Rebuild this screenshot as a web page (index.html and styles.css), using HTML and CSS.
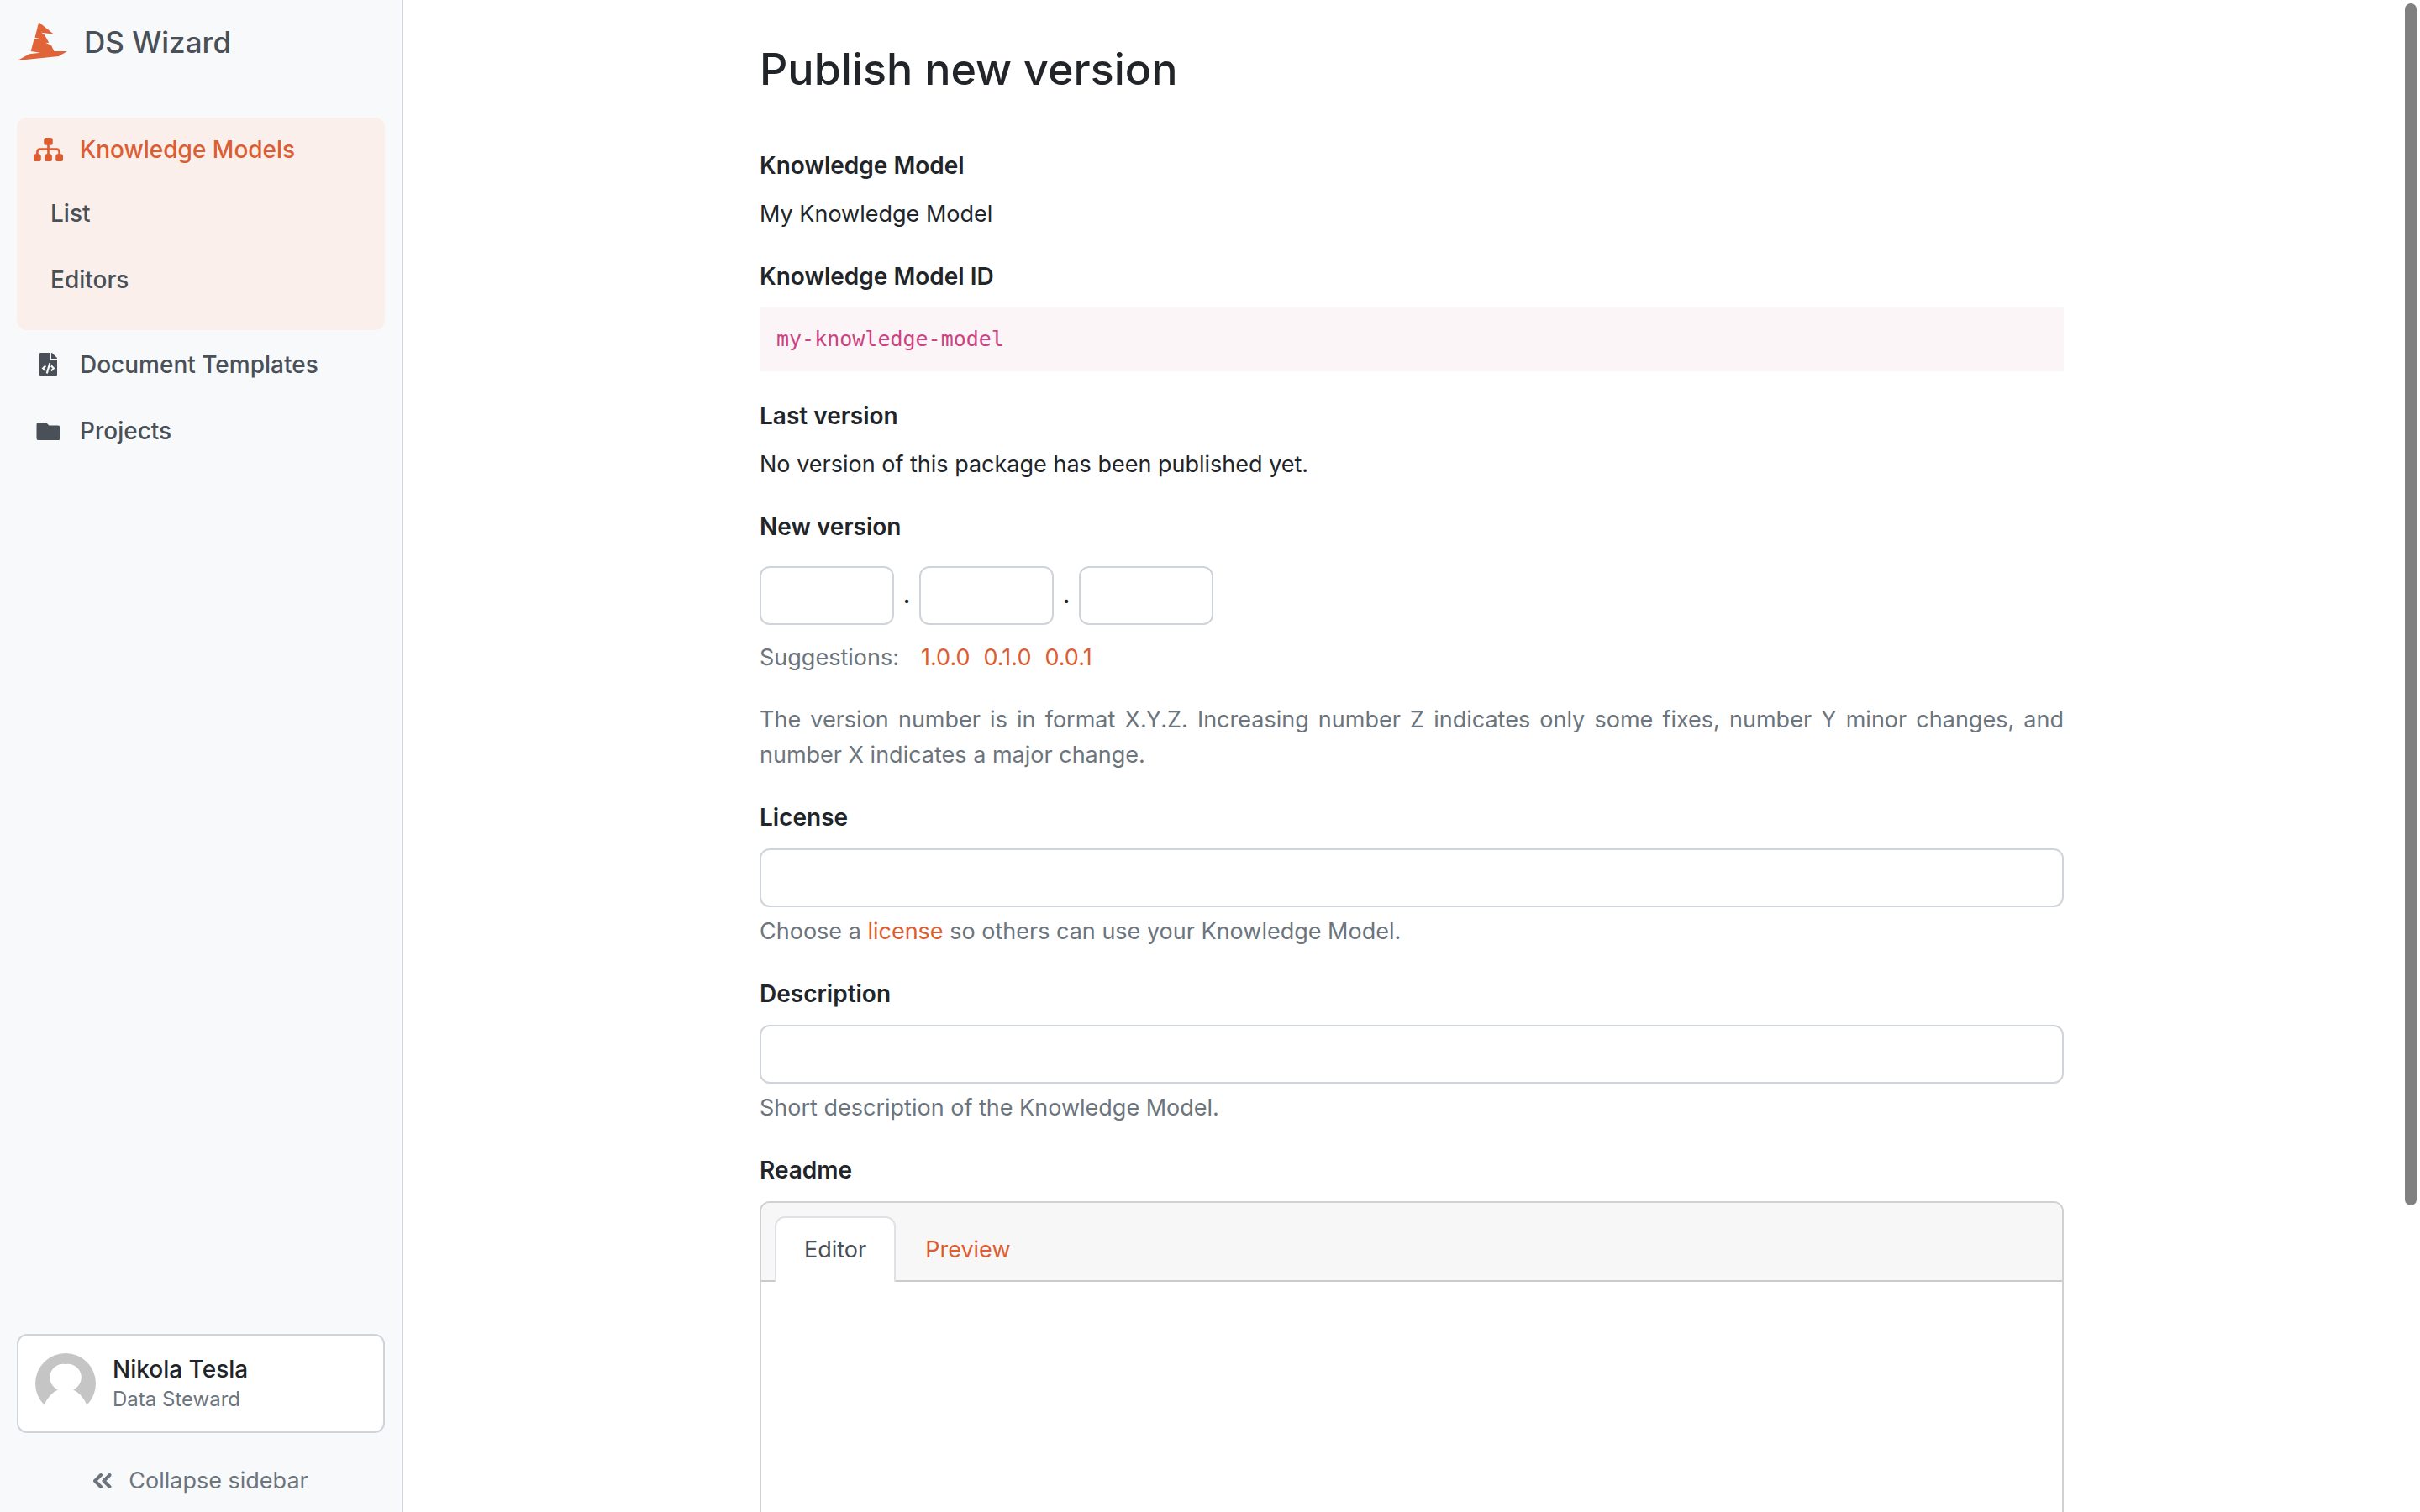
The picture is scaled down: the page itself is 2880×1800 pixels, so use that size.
FILE: index.html
```html
<!DOCTYPE html>
<html lang="en">
<head>
<meta charset="utf-8">
<title>Publish new version – DS Wizard</title>
<meta name="viewport" content="width=device-width, initial-scale=1">
<link rel="stylesheet" href="styles.css">
</head>
<body>
<div class="app">
  <aside class="sidebar">
    <a class="brand" href="#">
      <svg class="brand-logo" viewBox="0 0 60 46" aria-hidden="true"><path d="M26 0h1L44 13.700 29.300 11.700 33 14.500 38.300 23.700 34.500 24 41 27 44.500 34H60L50 40 0.700 45 15 37.300 28 35.700 16.700 34 20.500 19.800 26.700 18.700 21.500 17.700Z"/></svg>
      <span>DS Wizard</span>
    </a>
    <nav class="menu" aria-label="Main">
      <div class="menu-group">
        <a class="menu-link menu-link-active" href="#">
          <svg class="icon icon-sitemap" viewBox="0 0 640 512" aria-hidden="true"><path d="M224 48a48 48 0 0 1 48-48h96a48 48 0 0 1 48 48v64a48 48 0 0 1-48 48h-24v64h160a80 80 0 0 1 80 80v48h8a48 48 0 0 1 48 48v64a48 48 0 0 1-48 48h-64a48 48 0 0 1-48-48v-64a48 48 0 0 1 48-48h8v-48a32 32 0 0 0-32-32H344v80h8a48 48 0 0 1 48 48v64a48 48 0 0 1-48 48h-64a48 48 0 0 1-48-48v-64a48 48 0 0 1 48-48h8v-80H136a32 32 0 0 0-32 32v48h8a48 48 0 0 1 48 48v64a48 48 0 0 1-48 48H48a48 48 0 0 1-48-48v-64a48 48 0 0 1 48-48h8v-48a80 80 0 0 1 80-80h160v-64h-24a48 48 0 0 1-48-48z"/></svg>
          <span>Knowledge Models</span>
        </a>
        <div class="submenu">
          <a class="menu-link" href="#">List</a>
          <a class="menu-link" href="#">Editors</a>
        </div>
      </div>
      <a class="menu-link" href="#">
        <svg class="icon icon-file" viewBox="0 0 384 512" aria-hidden="true"><path d="M384 121.900V128H256V0h6.100c6.400 0 12.500 2.500 17 7l97.900 98c4.500 4.500 7 10.600 7 16.900zM248 160c-13.200 0-24-10.800-24-24V0H24C10.700 0 0 10.700 0 24v464c0 13.300 10.700 24 24 24h336c13.300 0 24-10.700 24-24V160H248zM123.200 400.500a5.400 5.400 0 0 1-7.600.2l-64.900-60.800a5.400 5.400 0 0 1 0-7.900l64.900-60.800a5.400 5.400 0 0 1 7.600.2l19.600 20.900a5.400 5.400 0 0 1-.4 7.700L101.700 336l40.800 35.900a5.400 5.400 0 0 1 .4 7.700zm51.300 50.500l-27.500-8a5.400 5.400 0 0 1-3.700-6.700l61.500-211.600a5.400 5.400 0 0 1 6.700-3.700l27.500 8a5.400 5.400 0 0 1 3.700 6.700l-61.500 211.600a5.400 5.400 0 0 1-6.700 3.700zm160.800-111l-64.900 60.800a5.400 5.400 0 0 1-7.600-.2l-19.600-20.900a5.400 5.400 0 0 1 .4-7.700l40.700-36-40.800-35.900a5.400 5.400 0 0 1-.4-7.700l19.600-20.900a5.400 5.400 0 0 1 7.600-.2l64.900 60.800a5.400 5.400 0 0 1 .1 7.900z"/></svg>
        <span>Document Templates</span>
      </a>
      <a class="menu-link" href="#">
        <svg class="icon icon-folder" viewBox="0 0 512 384" aria-hidden="true"><path d="M464 64H272L208 0H48A48 48 0 0 0 0 48v288a48 48 0 0 0 48 48h416a48 48 0 0 0 48-48V112a48 48 0 0 0-48-48z"/></svg>
        <span>Projects</span>
      </a>
    </nav>
    <div class="sidebar-footer">
      <a class="profile" href="#">
        <svg class="avatar" viewBox="0 0 72 72" aria-hidden="true"><circle class="avatar-back" cx="36" cy="36" r="36"/><path class="avatar-person" d="M36 13a16 16 0 0 1 9 30.500q10.500 4 17 19.500Q49 74 36 72 23 74 10 63 16.500 47.500 27 43.500A16 16 0 0 1 36 13z"/></svg>
        <span class="profile-text">
          <span class="profile-name">Nikola Tesla</span>
          <span class="profile-role">Data Steward</span>
        </span>
      </a>
      <button class="collapse" type="button">
        <svg class="icon-collapse" viewBox="0 0 22 18" aria-hidden="true"><path d="M9 2 2 9l7 7M19.500 2l-7 7 7 7"/></svg>
        <span>Collapse sidebar</span>
      </button>
    </div>
  </aside>

  <main class="content">
    <form class="page">
      <h1 class="page-title">Publish new version</h1>

      <div class="group">
        <span class="label">Knowledge Model</span>
        <p class="value">My Knowledge Model</p>
      </div>

      <div class="group">
        <span class="label">Knowledge Model ID</span>
        <code class="code">my-knowledge-model</code>
      </div>

      <div class="group">
        <span class="label">Last version</span>
        <p class="value">No version of this package has been published yet.</p>
      </div>

      <div class="group">
        <label class="label" for="version-major">New version</label>
        <div class="version-inputs">
          <input class="input" id="version-major" type="text" aria-label="Major version">
          <span class="dot">.</span>
          <input class="input" type="text" aria-label="Minor version">
          <span class="dot">.</span>
          <input class="input" type="text" aria-label="Patch version">
        </div>
        <div class="suggestions">
          <span class="suggestions-label">Suggestions:</span>
          <a class="link" href="#">1.0.0</a>
          <a class="link" href="#">0.1.0</a>
          <a class="link" href="#">0.0.1</a>
        </div>
      </div>

      <p class="group note">The version number is in format X.Y.Z. Increasing number Z indicates only some fixes, number Y minor changes, and number X indicates a major change.</p>

      <div class="group">
        <label class="label" for="license">License</label>
        <input class="input" id="license" type="text">
        <p class="help">Choose a <a class="link" href="#">license</a> so others can use your Knowledge Model.</p>
      </div>

      <div class="group">
        <label class="label" for="description">Description</label>
        <input class="input" id="description" type="text">
        <p class="help">Short description of the Knowledge Model.</p>
      </div>

      <div class="group">
        <label class="label" for="readme">Readme</label>
        <div class="card">
          <div class="tabs" role="tablist">
            <button class="tab tab-active" type="button" role="tab" aria-selected="true">Editor</button>
            <button class="tab" type="button" role="tab" aria-selected="false">Preview</button>
          </div>
          <textarea class="editor" id="readme"></textarea>
        </div>
      </div>
    </form>
    <div class="scroll-thumb" aria-hidden="true"></div>
  </main>
</div>
</body>
</html>
```
FILE: styles.css
```css
:root {
  --orange: #dc5d31;
  --text: #212529;
  --text-soft: #495057;
  --muted: #6c757d;
  --line: #ced4da;
}

* {
  box-sizing: border-box;
}

body {
  margin: 0;
  background: #fff;
  color: var(--text);
  font-family: Inter, "Liberation Sans", sans-serif;
  font-size: 27px;
  line-height: 42px;
}

a {
  text-decoration: none;
}

p {
  margin: 0;
}

button,
input,
textarea {
  font: inherit;
}

.app {
  display: flex;
  height: 100vh;
}

/* Sidebar */

.sidebar {
  display: flex;
  flex: 0 0 480px;
  flex-direction: column;
  padding: 20px 20px 16px;
  background: #f8f9fb;
  border-right: 2px solid var(--line);
}

.brand {
  display: flex;
  align-items: center;
  gap: 20px;
  height: 60px;
  margin-bottom: 60px;
  color: var(--text-soft);
  font-size: 35px;
  font-weight: 500;
}

.brand-logo {
  width: 60px;
  height: 46px;
  fill: #e16438;
}

.menu {
  display: flex;
  flex-direction: column;
  gap: 3px;
}

.menu-group {
  padding-bottom: 22px;
  background: #faefea;
  border-radius: 12px;
}

.menu-link {
  display: flex;
  align-items: center;
  gap: 20px;
  padding: 17px 20px;
  color: var(--text-soft);
  font-size: 28px;
  font-weight: 500;
}

.menu-link-active {
  color: var(--orange);
}

.submenu {
  display: flex;
  flex-direction: column;
  gap: 3px;
  padding-left: 20px;
}

.icon {
  flex: none;
  width: 35px;
  height: 28px;
  fill: currentColor;
}

.icon-folder {
  height: 21px;
}

.sidebar-footer {
  display: flex;
  flex-direction: column;
  gap: 36px;
  margin-top: auto;
}

.profile {
  display: flex;
  align-items: center;
  gap: 20px;
  padding: 20px;
  background: #fff;
  border: 2px solid var(--line);
  border-radius: 12px;
}

.avatar {
  width: 72px;
  height: 72px;
}

.avatar-back {
  fill: #c5c5c5;
}

.avatar-person {
  fill: #fff;
}

.profile-text {
  display: flex;
  flex-direction: column;
  padding-top: 2px;
  line-height: 36px;
}

.profile-name {
  color: var(--text);
  font-size: 28px;
  font-weight: 500;
}

.profile-role {
  color: var(--muted);
  font-size: 24px;
}

.collapse {
  display: flex;
  align-items: center;
  justify-content: center;
  gap: 20px;
  padding: 0;
  background: none;
  border: 0;
  color: var(--muted);
}

.icon-collapse {
  width: 22px;
  height: 18px;
  fill: none;
  stroke: currentColor;
  stroke-width: 4;
  stroke-linecap: round;
  stroke-linejoin: round;
}

/* Page */

.content {
  position: relative;
  flex: 1;
  min-width: 0;
  overflow: hidden;
}

.page {
  max-width: 1600px;
  margin: 0 auto;
  padding: 48px 24px;
}

.page-title {
  margin: 0 0 58px;
  font-size: 52px;
  font-weight: 500;
  line-height: 70px;
}

.group {
  margin-bottom: 32px;
}

.label {
  display: block;
  margin-bottom: 16px;
  font-size: 28px;
  font-weight: 600;
}

.code {
  display: block;
  padding: 20px;
  background: #fbf5f8;
  color: #cb4380;
  font-family: "DejaVu Sans Mono", monospace;
  font-size: 25px;
  line-height: 36px;
}

.input {
  display: block;
  width: 100%;
  height: 70px;
  padding: 12px 20px;
  background: #fff;
  border: 2px solid var(--line);
  border-radius: 12px;
}

.version-inputs {
  display: flex;
  align-items: center;
  margin: 26px 0 18px;
}

.version-inputs .input {
  width: 160px;
}

.dot {
  width: 30px;
  font-weight: 600;
  text-align: center;
}

.suggestions {
  display: flex;
  gap: 16px;
  color: var(--muted);
}

.suggestions-label {
  margin-right: 10px;
}

.link {
  color: var(--orange);
}

.help {
  margin-top: 8px;
  color: var(--muted);
}

.note {
  color: var(--muted);
  text-align: justify;
}

.card {
  overflow: hidden;
  background: #fff;
  border: 2px solid #d1d1d1;
  border-radius: 12px;
}

.tabs {
  display: flex;
  padding: 16px 16px 0;
  background: #f7f7f7;
  border-bottom: 2px solid #cbcbcb;
}

.tab {
  height: 78px;
  margin-bottom: -2px;
  padding: 0 33px;
  background: none;
  border: 2px solid transparent;
  border-bottom: 0;
  border-radius: 12px 12px 0 0;
  color: var(--orange);
}

.tab-active {
  background: #fff;
  border-color: #dee2e6;
  color: var(--text-soft);
}

.editor {
  display: block;
  width: 100%;
  height: 600px;
  padding: 20px;
  border: 0;
  resize: none;
}

/* Overlay scrollbar thumb */

.scroll-thumb {
  position: absolute;
  top: 4px;
  right: 4px;
  width: 14px;
  height: 1431px;
  background: #808080;
  border-radius: 8px;
}
```
